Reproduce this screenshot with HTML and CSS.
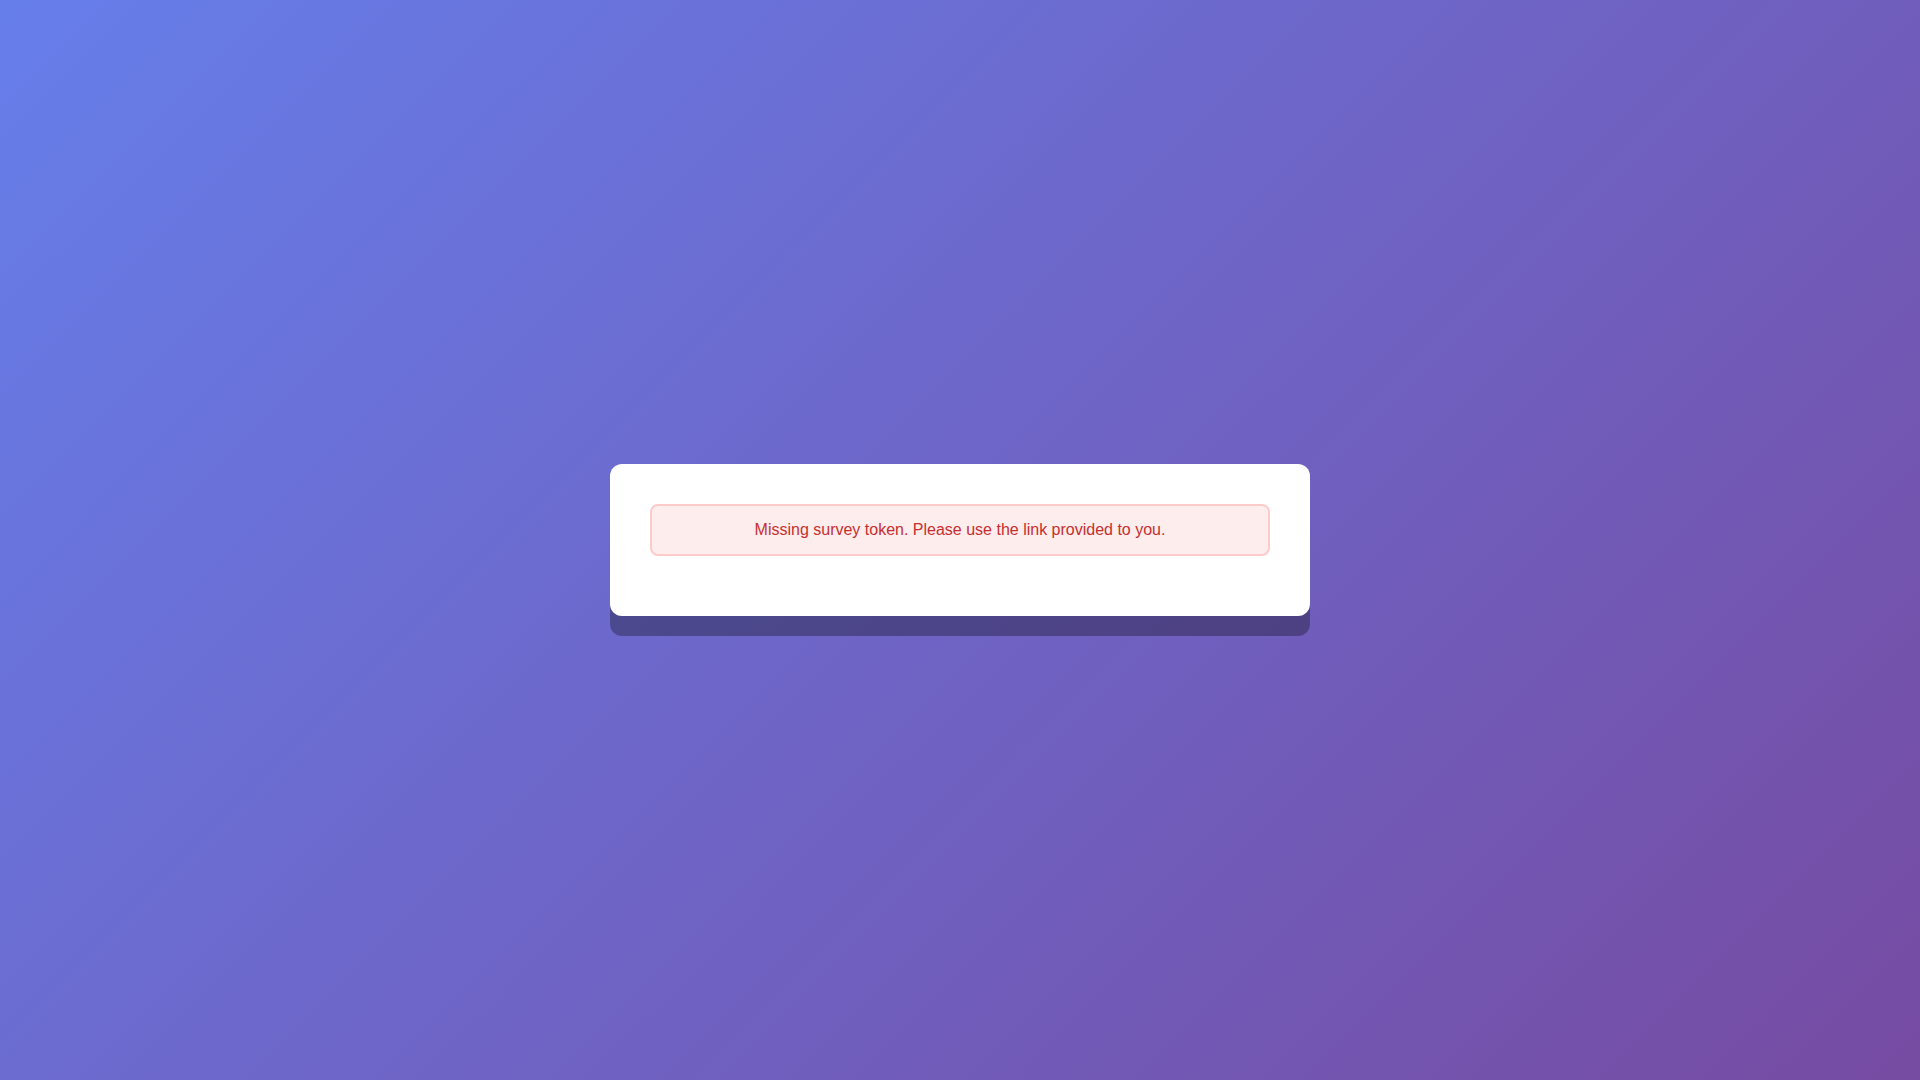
FILE: index.html
```html
<!DOCTYPE html>
<html lang="en">
<head>
<meta charset="utf-8">
<title>Survey</title>
<link rel="stylesheet" href="styles.css">
</head>
<body>
<main class="page">
  <div class="card">
    <div class="alert">Missing survey token. Please use the link provided to you.</div>
  </div>
</main>
</body>
</html>
```

FILE: styles.css
```css
* { box-sizing: border-box; }
html, body { margin: 0; padding: 0; }
body {
  font-family: "Liberation Sans", Arial, sans-serif;
  background: linear-gradient(135deg, #667eea 0%, #764ba2 100%);
  min-height: 100vh;
}
.page {
  min-height: 100vh;
  display: flex;
  align-items: center;
  justify-content: center;
}
.card {
  width: 700px;
  background: #fff;
  border-radius: 12px;
  padding: 40px;
  box-shadow: 0 20px 0 rgba(0, 0, 0, 0.3);
}
.alert {
  background: #feeded;
  border: 2px solid #fecaca;
  border-radius: 8px;
  color: #c62f2f;
  font-size: 16px;
  padding: 15px;
  text-align: center;
  margin-bottom: 20px;
}
```
